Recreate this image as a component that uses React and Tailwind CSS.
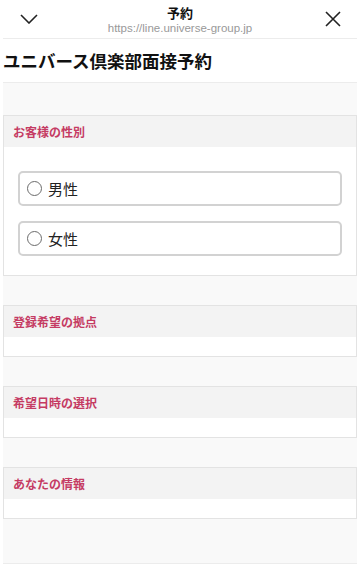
import React from "react";

const font = { fontFamily: '"Noto Sans CJK JP", "Noto Sans", sans-serif' };

function Section({ title, children, bodyClass }) {
  return (
    <div className="border border-[#e3e3e3] bg-white">
      <div className="h-[31px] bg-[#f3f3f3] flex items-center px-[9px]">
        <span className="text-[12px] font-bold text-[#c53b63] leading-none">{title}</span>
      </div>
      <div className={bodyClass}>{children}</div>
    </div>
  );
}

function Radio({ label }) {
  return (
    <div className="h-[35px] border-2 border-[#d2d2d2] rounded-[5px] flex items-center pl-[7px] gap-[6px] bg-white">
      <div className="w-[15px] h-[15px] rounded-full border-[1.5px] border-[#6b6b6b]" />
      <span className="text-[15px] text-[#222] leading-none">{label}</span>
    </div>
  );
}

export default function App() {
  return (
    <div className="w-[360px] h-[565px] bg-white overflow-hidden" style={font}>
      <div className="h-[38px] flex items-center justify-between px-[20px] relative">
        <svg width="18" height="10" viewBox="0 0 18 10" fill="none" stroke="#222" strokeWidth="1.6">
          <path d="M1 1 L9 9 L17 1" />
        </svg>
        <div className="absolute left-0 right-0 top-[4px] flex flex-col items-center">
          <span className="text-[13px] font-bold text-[#111] leading-[17px]">予約</span>
          <span className="text-[11.5px] text-[#999] leading-[15px]" style={{ fontFamily: '"Liberation Sans", Arial, sans-serif' }}>https://line.universe-group.jp</span>
        </div>
        <svg width="16" height="16" viewBox="0 0 16 16" fill="none" stroke="#222" strokeWidth="1.6" className="mr-[-1px]">
          <path d="M1 1 L15 15 M15 1 L1 15" />
        </svg>
      </div>
      <div className="mx-[3px] border-t border-[#ececec] h-[44px] flex items-center">
        <h1 className="text-[17.5px] font-bold text-[#111] leading-none">ユニバース倶楽部面接予約</h1>
      </div>
      <div className="mx-[3px] border-t border-[#ececec] bg-[#f9f9f9] h-[482px] flex flex-col">
        <div className="h-[32px]" />
        <Section title="お客様の性別" bodyClass="pt-[24px] pb-[19px] px-[14px] flex flex-col gap-[15px]">
          <Radio label="男性" />
          <Radio label="女性" />
        </Section>
        <div className="h-[29px]" />
        <Section title="登録希望の拠点" bodyClass="h-[19px]" />
        <div className="h-[29px]" />
        <Section title="希望日時の選択" bodyClass="h-[19px]" />
        <div className="h-[29px]" />
        <Section title="あなたの情報" bodyClass="h-[19px]" />
        <div className="flex-1 border-b border-[#ececec]" />
      </div>
    </div>
  );
}
